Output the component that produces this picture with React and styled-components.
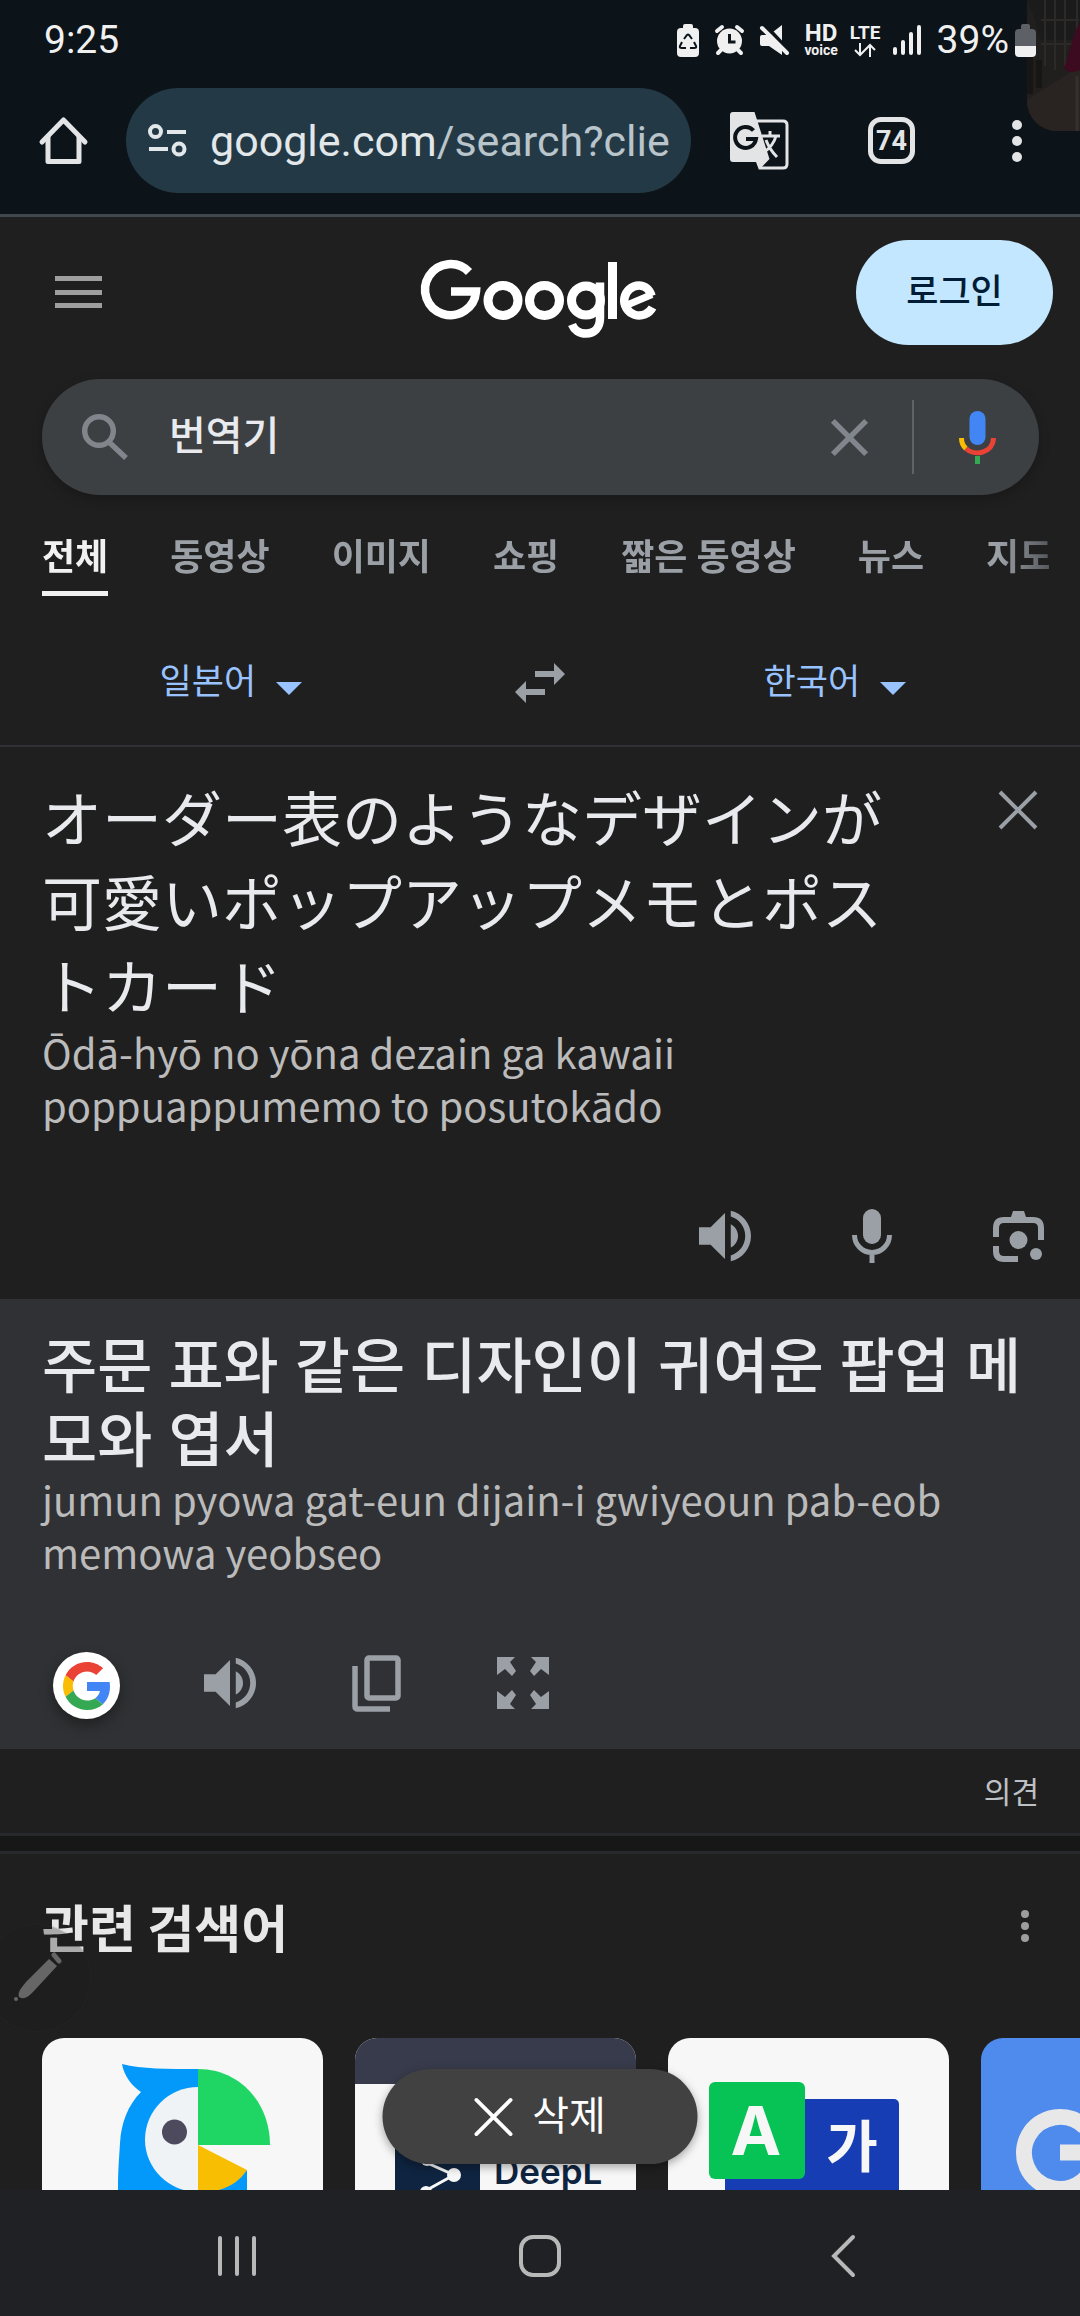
import React, { useState } from "react";
import styled, { createGlobalStyle, css } from "styled-components";

const GlobalStyle = createGlobalStyle`
  *, *::before, *::after { box-sizing: border-box; }
  body {
    margin: 0;
    background: #1f1f1f;
    color: #e8e8e8;
    font-family: Roboto, "Noto Sans CJK KR", sans-serif;
  }
  button, input, select, textarea {
    margin: 0;
    padding: 0;
    border: 0;
    background: none;
    color: inherit;
    font: inherit;
  }
  button { cursor: pointer; }
  svg { display: block; flex: none; overflow: visible; }
`;

const Phone = styled.div`
  position: relative;
  display: flex;
  flex-direction: column;
  height: 100vh;
  overflow: hidden;
`;

/* ---------- status bar and browser toolbar ---------- */

const BrowserTop = styled.header`
  position: relative;
  flex: none;
  background: #0c1319;
  border-bottom: 3px solid #40484e;
  font-family: Roboto, sans-serif;
`;

const CameraPreview = styled.div`
  position: absolute;
  top: 0;
  right: 0;
  width: 53px;
  height: 131px;
  overflow: hidden;
  border-bottom-left-radius: 30px;
`;

const StatusBar = styled.div`
  position: relative;
  display: flex;
  align-items: center;
  justify-content: space-between;
  height: 80px;
  padding: 0 44px;
  color: #f0f0f0;
  font-size: 39px;
  line-height: 48px;
`;

const StatusIcons = styled.div`
  display: flex;
  align-items: center;
  gap: 16px;
`;

const NetworkIcons = styled.div`
  display: flex;
  align-items: center;
  gap: 11px;
`;

const NetworkTag = styled.span`
  display: flex;
  flex-direction: column;
  align-items: center;
  width: 33px;
  font-size: ${(p) => p.$size}px;
  font-weight: 700;
  line-height: 20px;
  small {
    font-size: 14px;
    font-weight: 700;
    line-height: 14px;
  }
`;

const BatteryLevel = styled.span`
  display: flex;
  align-items: center;
  gap: 6px;
`;

const Toolbar = styled.div`
  display: flex;
  align-items: center;
  padding: 8px 40px 21px;
  color: #e3e4e6;
`;

const ToolButton = styled.button`
  display: flex;
  align-items: center;
  justify-content: center;
  flex: none;
`;

const MoreButton = styled(ToolButton)`
  width: 46px;
`;

const AddressBar = styled.button`
  display: flex;
  flex: 1;
  min-width: 0;
  align-items: center;
  gap: 23px;
  height: 105px;
  margin: 0 39px;
  padding: 0 21px 0 22px;
  border-radius: 53px;
  background: #233946;
`;

const Address = styled.span`
  flex: 1;
  min-width: 0;
  overflow: hidden;
  color: #b9c4cb;
  font-size: 43px;
  line-height: 56px;
  text-align: left;
  white-space: nowrap;
  b {
    color: #e2e7ea;
    font-weight: 400;
  }
`;

const ToolbarActions = styled.div`
  display: flex;
  align-items: center;
  gap: 79px;
`;

const TabCount = styled(ToolButton)`
  width: 47px;
  height: 47px;
  border: 5px solid #e3e4e6;
  border-radius: 13px;
  font-size: 27px;
  font-weight: 700;
  line-height: 32px;
`;

/* ---------- page ---------- */

const Page = styled.main`
  flex: 1;
  min-height: 0;
  overflow-x: hidden;
  overflow-y: auto;
  scrollbar-width: none;
`;

const SiteHeader = styled.div`
  display: grid;
  grid-template-columns: 1fr auto 1fr;
  align-items: center;
  padding: 23px 27px 34px;
`;

const MenuButton = styled(ToolButton)`
  justify-self: start;
  margin-left: 28px;
`;

const LoginLink = styled.a`
  justify-self: end;
  width: 197px;
  border-radius: 53px;
  background: #c2e7ff;
  color: #001d35;
  font-size: 35px;
  font-weight: 500;
  line-height: 105px;
  text-align: center;
  text-decoration: none;
`;

const SearchForm = styled.form`
  display: flex;
  align-items: center;
  height: 116px;
  margin: 0 41px 0 42px;
  padding: 0 43px 0 40px;
  border-radius: 58px;
  background: #3c4043;
  box-shadow: 0 4px 12px rgba(0, 0, 0, 0.22);
`;

const SearchInput = styled.input`
  flex: 1;
  min-width: 0;
  margin-left: 41px;
  color: #e8eaed;
  font-size: 40px;
  font-weight: 500;
  line-height: 56px;
  outline: none;
`;

const ClearSearchButton = styled(ToolButton)`
  color: #80868b;
`;

const SearchDivider = styled.span`
  width: 2px;
  height: 74px;
  margin: 0 45px 0 44px;
  background: #5f6368;
`;

const Tabs = styled.nav`
  display: flex;
  gap: 62px;
  height: 101px;
  margin: 0 31px 0 42px;
  overflow: hidden;
  mask-image: linear-gradient(to right, #000 calc(100% - 50px), rgba(0, 0, 0, 0.45));
`;

const Tab = styled.a`
  flex: none;
  padding-top: 28px;
  border-bottom: 5px solid ${(p) => (p.$active ? "#f1f1f1" : "transparent")};
  color: ${(p) => (p.$active ? "#f1f1f1" : "#9aa0a6")};
  font-size: 36px;
  font-weight: 700;
  line-height: 70px;
  text-decoration: none;
  white-space: nowrap;
`;

const LanguageRow = styled.div`
  display: grid;
  grid-template-columns: 1fr 50px 1fr;
  align-items: center;
  padding: 24px 0 0;
  height: 151px;
  border-bottom: 2px solid #303134;
`;

const LanguagePicker = styled.label`
  display: flex;
  align-items: center;
  justify-content: center;
  gap: 19px;
  padding: ${(p) => (p.$side === "from" ? "0 54px 0 0" : "0 0 0 24px")};
  color: #99c3ff;
`;

const LanguageSelect = styled.select`
  appearance: none;
  width: 97px;
  font-size: 35px;
  line-height: 48px;
  outline: none;
  option { color: #1f1f1f; }
`;

const Caret = styled.span`
  margin-top: 12px;
  border: 13px solid transparent;
  border-top-color: #99c3ff;
  border-bottom: 0;
`;

const Panel = styled.section`
  display: flex;
  flex-direction: column;
  justify-content: space-between;
  padding: ${(p) => (p.$result ? "26px 42px 30px" : "27px 36px 36px 42px")};
  height: ${(p) => (p.$result ? 450 : 552)}px;
  background: ${(p) => (p.$result ? "#303134" : "transparent")};
  color: #9aa0a6;
`;

const SourceTop = styled.div`
  display: flex;
  align-items: flex-start;
  justify-content: space-between;
`;

const SourceColumn = styled.div`
  flex: 1;
  min-width: 0;
  max-width: 870px;
`;

const bigText = css`
  margin: 0;
  color: #e8eaed;
  font-size: 60px;
  font-weight: 400;
`;

const SourceText = styled.textarea`
  ${bigText}
  display: block;
  width: 100%;
  overflow: hidden;
  font-family: "Noto Sans CJK JP", sans-serif;
  line-height: 84px;
  resize: none;
  outline: none;
`;

const ResultText = styled.p`
  ${bigText}
  font-family: "Noto Sans CJK KR", sans-serif;
  font-weight: 500;
  line-height: 74px;
  word-break: break-all;
  span {
    font-family: Inter, "Noto Sans CJK KR", sans-serif;
    line-height: 1;
  }
`;

const Romanized = styled.p`
  max-width: 920px;
  margin: 0;
  color: #bbbbbb;
  font-family: "Noto Sans CJK KR", sans-serif;
  font-size: 40px;
  line-height: 53px;
`;

const ShortRomanized = styled(Romanized)`
  max-width: 680px;
`;

const ClearButton = styled(ToolButton)`
  margin: 16px 6px 0 0;
`;

const SourceActions = styled.div`
  display: flex;
  align-items: center;
  justify-content: flex-end;
  gap: 101px;
`;

const ResultActions = styled.div`
  display: flex;
  align-items: center;
  gap: 96px;
  padding-left: 11px;
`;

const GoogleSearchButton = styled(ToolButton)`
  width: 67px;
  height: 67px;
  margin: 5px -12px 0 0;
  border-radius: 50%;
  background: #ffffff;
  box-shadow: 0 6px 14px rgba(0, 0, 0, 0.35);
`;

const FeedbackRow = styled.div`
  display: flex;
  justify-content: flex-end;
  height: 84px;
  padding: 24px 41px 0;
`;

const FeedbackLink = styled.a`
  color: #bdc1c6;
  font-size: 30px;
  line-height: 40px;
  text-decoration: none;
`;

const SectionGap = styled.hr`
  height: 21px;
  margin: 0;
  border: solid #27292c;
  border-width: 3px 0;
  background: #171717;
`;

const RelatedHeader = styled.div`
  display: flex;
  align-items: center;
  justify-content: space-between;
  height: 184px;
  padding: 0 51px 40px 42px;
  color: #9e9e9e;
`;

const RelatedTitle = styled.h2`
  margin: 0;
  color: #e8e8e8;
  font-family: "Noto Sans CJK KR", sans-serif;
  font-size: 51px;
  font-weight: 700;
  line-height: 64px;
`;

const Cards = styled.div`
  display: flex;
  gap: 32px;
  padding-left: 42px;
  overflow: hidden;
`;

const Card = styled.a`
  flex: none;
  width: 281px;
  height: 281px;
  overflow: hidden;
  border-radius: 22px;
  background: ${(p) => p.$bg};
`;

/* ---------- overlays and system navigation ---------- */

const PenBubble = styled.div`
  position: absolute;
  left: -16px;
  bottom: 285px;
  width: 106px;
  height: 106px;
  border-radius: 50%;
  background: rgba(31, 31, 31, 0.3);
  box-shadow: 0 0 2px rgba(60, 60, 60, 0.5);
`;

const DeletePill = styled.button`
  position: absolute;
  left: 50%;
  bottom: 152px;
  display: flex;
  align-items: center;
  justify-content: center;
  gap: 20px;
  width: 315px;
  height: 95px;
  border-radius: 48px;
  background: #414141;
  box-shadow: 0 3px 10px rgba(0, 0, 0, 0.35);
  color: #ffffff;
  font-size: 40px;
  line-height: 56px;
  transform: translateX(-50%);
`;

const SystemNav = styled.nav`
  display: grid;
  grid-template-columns: repeat(3, 303px);
  flex: none;
  justify-content: center;
  height: 126px;
  padding-top: 6px;
  background: #202125;
  color: #b8b8b8;
`;

/* ---------- drawings ---------- */

const PreviewPhoto = () => (
  <svg width="53" height="131" viewBox="0 0 53 131">
    <rect width="53" height="131" fill="#211f1d" />
    <path d="M0 0h53v40H14L6 14z" fill="#1c1b1b" />
    <path d="M18 0v66M28 0v70M38 0v66M14 20h38M14 44h32M50 0v60" stroke="#2c2a28" strokeWidth="2" fill="none" />
    <path d="M3 52v42M12 60v28" stroke="#171615" strokeWidth="6" />
    <path d="M0 100L53 66v65H0z" fill="#292421" />
    <path d="M53 22c-8 14-10 30-16 46 6 6 10 4 16 2z" fill="#3c0b20" />
    <path d="M50 76v55" stroke="#35302d" strokeWidth="3" />
  </svg>
);

const PowerSaveIcon = () => (
  <svg width="22" height="33" viewBox="0 0 22 33">
    <path d="M6 4V2q0-2 2-2h6q2 0 2 2v2h2q4 0 4 4v21q0 4-4 4H4q-4 0-4-4V8q0-4 4-4z" fill="#f0f0f0" />
    <g fill="none" stroke="#0c1319" strokeWidth="2">
      <path d="M7 15l3-4q1-1 2 0l3 4" />
      <path d="M5 18l-2 4q-1 2 2 2h4" />
      <path d="M17 18l2 4q1 2-2 2h-4" />
    </g>
  </svg>
);

const AlarmIcon = () => (
  <svg width="29" height="30" viewBox="0 0 29 30">
    <circle cx="14.500" cy="16" r="12.500" fill="#f0f0f0" />
    <path d="M2 6l5-4M27 6l-5-4M6 25l-3 3M23 25l3 3" stroke="#f0f0f0" strokeWidth="4" strokeLinecap="round" />
    <path d="M14.500 9v8h6" fill="none" stroke="#0c1319" strokeWidth="3" />
  </svg>
);

const MuteIcon = () => (
  <svg width="29" height="30" viewBox="0 0 29 30">
    <path d="M2 10h7L22 0v30L9 21H2q-2 0-2-2v-7q0-2 2-2z" fill="#f0f0f0" />
    <path d="M5 0l25 27" stroke="#0c1319" strokeWidth="4" />
    <path d="M2 3l25 25" stroke="#f0f0f0" strokeWidth="4" strokeLinecap="round" />
  </svg>
);

const SignalIcon = () => (
  <svg width="28" height="30" viewBox="0 0 28 30">
    <path d="M2 24v4M10 17v11M18 9v19M26 2v26" stroke="#f0f0f0" strokeWidth="4" strokeLinecap="round" />
  </svg>
);

const DataArrows = () => (
  <svg width="22" height="14" viewBox="0 0 22 14">
    <path d="M6 0v12M1 7l5 5 5-5M16 14V2M11 7l5-5 5 5" fill="none" stroke="#f0f0f0" strokeWidth="2" />
  </svg>
);

const BatteryIcon = () => (
  <svg width="21" height="33" viewBox="0 0 21 33">
    <path d="M6 5V2q0-2 2-2h5q2 0 2 2v3h2q4 0 4 4v13H0V9q0-4 4-4z" fill="#5d6066" />
    <path d="M0 22h21v7q0 4-4 4H4q-4 0-4-4z" fill="#f0f0f0" />
  </svg>
);

const HomeIcon = () => (
  <svg width="47" height="47" viewBox="0 0 47 47" fill="none" stroke="currentColor" strokeWidth="5">
    <path d="M2 25L23.500 3 45 25" strokeLinejoin="round" strokeLinecap="round" />
    <path d="M8 19v25.500h31V19" strokeLinejoin="round" />
  </svg>
);

const TuneIcon = () => (
  <svg width="39" height="33" viewBox="0 0 39 33" fill="none" stroke="#e2e7ea" strokeWidth="4">
    <circle cx="7.500" cy="7.500" r="5.500" />
    <path d="M19 8h19M1 25h19" />
    <circle cx="31" cy="25" r="5.500" />
  </svg>
);

const TranslateIcon = () => (
  <svg width="59" height="58" viewBox="0 0 59 58">
    <path d="M25 9h28q4 0 4 4v39q0 4-4 4H30" fill="none" stroke="currentColor" strokeWidth="3" />
    <path d="M3 0h21.500L39.500 47 29 58l-3-8H3q-3 0-3-3V3q0-3 3-3z" fill="currentColor" />
    <path d="M23.500 18.500A10.500 10.500 0 1 0 26 27H16" fill="none" stroke="#0c1319" strokeWidth="4" />
    <path d="M32 24h18M40 19v5M46 24c-2 8-7 13-13 17M36 28c3 8 6 12 11 17" fill="none" stroke="currentColor" strokeWidth="3" />
  </svg>
);

const DotsIcon = ({ r, gap }) => {
  const height = gap * 2 + r * 2;
  return (
    <svg width={r * 2} height={height} viewBox={`0 0 ${r * 2} ${height}`} fill="currentColor">
      <circle cx={r} cy={r} r={r} />
      <circle cx={r} cy={r + gap} r={r} />
      <circle cx={r} cy={r + gap * 2} r={r} />
    </svg>
  );
};

const MenuIcon = () => (
  <svg width="47" height="33" viewBox="0 0 47 33" fill="#9e9e9e">
    <rect width="47" height="5" />
    <rect y="14" width="47" height="5" />
    <rect y="27" width="47" height="5" />
  </svg>
);

const GoogleLogo = () => (
  <svg width="235" height="92" viewBox="2 -13 235 92" role="img" aria-label="Google" fill="none" stroke="#ffffff" strokeWidth="9">
    <path d="M48 12A25.500 25.500 0 1 0 55 31.500H30" strokeWidth="8.500" />
    <circle cx="82" cy="40.500" r="15" />
    <circle cx="123.500" cy="40.500" r="15" />
    <circle cx="165" cy="40.500" r="14.500" />
    <path d="M179 22.500V58c0 10-6 15.500-14 15.500-7 0-12-4-14-9" strokeWidth="8.500" />
    <path d="M191.500 2v57" />
    <path d="M205 45.500l26-11" strokeWidth="7" />
    <path d="M230.500 36c-2-7-7-10.500-12.500-10.500a15 15 0 1 0 13.500 22" strokeWidth="8.500" />
  </svg>
);

const SearchIcon = () => (
  <svg width="46" height="46" viewBox="0 0 46 46" fill="none" stroke="#80868b" strokeWidth="5.500">
    <circle cx="17" cy="17" r="14.300" />
    <path d="M28 29l16 15" />
  </svg>
);

const CrossIcon = ({ size, stroke, cap }) => (
  <svg width={size} height={size} viewBox="0 0 40 40" fill="none" stroke="currentColor" strokeWidth={stroke} strokeLinecap={cap}>
    <path d="M2 2l36 36M38 2L2 38" />
  </svg>
);

const ColorMicIcon = () => (
  <svg width="37" height="53" viewBox="0 0 37 53" fill="none">
    <rect x="10.500" width="16" height="34" rx="8" fill="#4285f4" />
    <path d="M2.500 27c0 4 1.500 8 4.500 10.500" stroke="#fbbc04" strokeWidth="5" />
    <path d="M7 37.500c8 8 27 5 27.500-10.500" stroke="#ea4335" strokeWidth="5" />
    <path d="M18.500 45v8" stroke="#34a853" strokeWidth="5" />
  </svg>
);

const SwapIcon = () => (
  <svg width="50" height="40" viewBox="0 0 50 40" fill="#9aa0a6">
    <path d="M20 8h19V0l11 11-11 11v-8H20z" />
    <path d="M30 26H11v-8L0 29l11 11v-8h19z" />
  </svg>
);

const VolumeIcon = () => (
  <svg width="52" height="52" viewBox="3 3 18 18" fill="currentColor">
    <path d="M3 9v6h4l5 5V4L7 9H3zm13.500 3c0-1.770-1.020-3.290-2.500-4.030v8.050c1.480-.730 2.500-2.250 2.500-4.020zM14 3.230v2.060c2.890.860 5 3.540 5 6.710s-2.110 5.850-5 6.710v2.060c4.010-.910 7-4.490 7-8.770s-2.990-7.860-7-8.770z" />
  </svg>
);

const MicIcon = () => (
  <svg width="40" height="54" viewBox="0 0 40 54">
    <rect x="11" width="18" height="35" rx="9" fill="currentColor" />
    <path d="M2.500 26a17.500 17.500 0 0 0 35 0M20 43v11" fill="none" stroke="currentColor" strokeWidth="5" />
  </svg>
);

const LensIcon = () => (
  <svg width="51" height="51" viewBox="0 0 51 51">
    <path d="M3 26v-9q0-8 8-8h29q8 0 8 8v12M3 35v5q0 8 8 8h14" fill="none" stroke="currentColor" strokeWidth="6" />
    <path d="M17 9l3-9h11l3 9z" fill="currentColor" />
    <circle cx="25.500" cy="29" r="9" fill="currentColor" />
    <circle cx="43" cy="43" r="6" fill="currentColor" />
  </svg>
);

const CopyIcon = () => (
  <svg width="49" height="57" viewBox="0 0 49 57" fill="none" stroke="currentColor" strokeWidth="5.500">
    <rect x="15" y="3" width="31" height="40" rx="2" />
    <path d="M3 11v40q0 3 3 3h32" />
  </svg>
);

const ARROW = "0,0 18,0 13,5 19,14 15,19 8,12 0,18";
const ExpandIcon = () => (
  <svg width="52" height="52" viewBox="0 0 52 52" fill="currentColor">
    <polygon points={ARROW} />
    <polygon points={ARROW} transform="translate(52 0) scale(-1 1)" />
    <polygon points={ARROW} transform="translate(0 52) scale(1 -1)" />
    <polygon points={ARROW} transform="translate(52 52) scale(-1 -1)" />
  </svg>
);

const GoogleMark = () => (
  <svg width="48" height="48" viewBox="0 0 48 48">
    <path fill="#ea4335" d="M24 9.500c3.540 0 6.710 1.220 9.210 3.600l6.850-6.850C35.900 2.380 30.470 0 24 0 14.620 0 6.510 5.380 2.560 13.220l7.980 6.190C12.430 13.720 17.740 9.500 24 9.500z" />
    <path fill="#4285f4" d="M46.980 24.550c0-1.570-.150-3.090-.380-4.550H24v9.020h12.940c-.580 2.960-2.260 5.480-4.780 7.180l7.730 6c4.510-4.180 7.090-10.360 7.090-17.650z" />
    <path fill="#fbbc05" d="M10.530 28.590c-.480-1.450-.760-2.990-.760-4.590s.270-3.140.760-4.590l-7.980-6.190C.920 16.460 0 20.120 0 24c0 3.880.920 7.540 2.560 10.780l7.970-6.190z" />
    <path fill="#34a853" d="M24 48c6.480 0 11.930-2.130 15.890-5.810l-7.730-6c-2.150 1.450-4.920 2.300-8.160 2.300-6.260 0-11.570-4.220-13.470-9.910l-7.980 6.190C6.510 42.620 14.620 48 24 48z" />
  </svg>
);

const ParrotArt = () => (
  <svg width="281" height="281" viewBox="0 0 281 281">
    <path d="M80 26c20 5 45 5 76 5v250H76V152c0-20 1-30 2-47 1-20 8-38 21-51-9-6-17-16-19-28z" fill="#0399fb" />
    <path d="M205 132v149h-50V155z" fill="#0399fb" />
    <path d="M156 49a53 52.500 0 0 0 0 105z" fill="#eff3f5" />
    <path d="M156 31c42 0 72 34 72 76h-72z" fill="#1fd665" />
    <path d="M156 107l49 25c-10 15-25 22-49 23z" fill="#f8be02" />
    <circle cx="132.500" cy="94" r="12.500" fill="#4c4a5c" />
  </svg>
);

const DeepLArt = () => (
  <svg width="281" height="281" viewBox="0 0 281 281">
    <rect width="281" height="46" fill="#373b4b" />
    <rect x="40" y="80" width="85" height="110" fill="#0f2440" />
    <path d="M70 124l29 13-29 16" fill="none" stroke="#f7f7f7" strokeWidth="3" />
    <circle cx="99" cy="137" r="7" fill="#f7f7f7" />
    <circle cx="72" cy="122" r="6" fill="#f7f7f7" />
    <circle cx="71" cy="154" r="6" fill="#f7f7f7" />
    <text x="139" y="146" fill="#0f2440" fontFamily="Inter, sans-serif" fontSize="35" fontWeight="600">DeepL</text>
  </svg>
);

const PapagoArt = () => (
  <svg width="281" height="281" viewBox="0 0 281 281">
    <rect x="57" y="61" width="174" height="160" rx="5" fill="#173db5" />
    <rect x="41" y="44" width="96" height="97" rx="6" fill="#07c255" />
    <text x="88" y="117" textAnchor="middle" fill="#f7f7f7" fontFamily="Inter, sans-serif" fontSize="68" fontWeight="700">A</text>
    <text x="184" y="129" textAnchor="middle" fill="#f7f7f7" fontFamily="Noto Sans CJK KR, sans-serif" fontSize="56" fontWeight="700">가</text>
  </svg>
);

const TranslateArt = () => (
  <svg width="281" height="281" viewBox="0 0 281 281">
    <path d="M104 89A36 36 0 1 0 115 114.500H79" fill="none" stroke="#e8e8e8" strokeWidth="16" />
  </svg>
);

const PenIcon = () => (
  <svg width="106" height="106" viewBox="-16 1925 106 106">
    <path d="M49 1959l8 7-24 26c-5 5-9 8-14 5-2-5 3-10 7-15z" fill="#666666" />
    <path d="M54 1955l5 6" stroke="#666666" strokeWidth="5" strokeLinecap="round" />
    <circle cx="16" cy="1999" r="2" fill="#666666" />
  </svg>
);

const RecentsIcon = () => (
  <svg width="38" height="42" viewBox="0 0 38 42">
    <path d="M2 3v36M19 3v36M36 3v36" stroke="currentColor" strokeWidth="4" strokeLinecap="round" />
  </svg>
);

const HomeKeyIcon = () => (
  <svg width="42" height="42" viewBox="0 0 42 42">
    <rect x="2" y="2" width="38" height="38" rx="12" fill="none" stroke="currentColor" strokeWidth="4" />
  </svg>
);

const BackIcon = () => (
  <svg width="24" height="42" viewBox="0 0 24 42">
    <path d="M22 2L3 21l19 19" fill="none" stroke="currentColor" strokeWidth="4" strokeLinecap="round" />
  </svg>
);

const TABS = ["전체", "동영상", "이미지", "쇼핑", "짧은 동영상", "뉴스", "지도"];
const LANGUAGES = ["일본어", "한국어"];

function Language({ side, label, value, onChange }) {
  return (
    <LanguagePicker $side={side}>
      <LanguageSelect aria-label={label} value={value} onChange={(e) => onChange(e.target.value)}>
        {LANGUAGES.map((l) => (
          <option key={l}>{l}</option>
        ))}
      </LanguageSelect>
      <Caret />
    </LanguagePicker>
  );
}

export default function App() {
  const [query, setQuery] = useState("번역기");
  const [from, setFrom] = useState("일본어");
  const [to, setTo] = useState("한국어");
  const [source, setSource] = useState("オーダー表のようなデザインが可愛いポップアップメモとポストカード");

  return (
    <Phone>
      <GlobalStyle />
      <BrowserTop>
        <CameraPreview><PreviewPhoto /></CameraPreview>
        <StatusBar>
          <span>9:25</span>
          <StatusIcons>
            <PowerSaveIcon />
            <AlarmIcon />
            <MuteIcon />
            <NetworkIcons>
              <NetworkTag $size={24}>HD<small>voice</small></NetworkTag>
              <NetworkTag $size={19}>LTE<DataArrows /></NetworkTag>
              <SignalIcon />
            </NetworkIcons>
            <BatteryLevel>39%<BatteryIcon /></BatteryLevel>
          </StatusIcons>
        </StatusBar>
        <Toolbar>
          <ToolButton aria-label="홈"><HomeIcon /></ToolButton>
          <AddressBar>
            <TuneIcon />
            <Address><b>google.com</b>/search?client</Address>
          </AddressBar>
          <ToolbarActions>
            <ToolButton aria-label="번역"><TranslateIcon /></ToolButton>
            <TabCount>74</TabCount>
            <MoreButton aria-label="더보기"><DotsIcon r={5} gap={16} /></MoreButton>
          </ToolbarActions>
        </Toolbar>
      </BrowserTop>

      <Page>
        <SiteHeader>
          <MenuButton aria-label="메뉴"><MenuIcon /></MenuButton>
          <GoogleLogo />
          <LoginLink href="#login">로그인</LoginLink>
        </SiteHeader>

        <SearchForm role="search" onSubmit={(e) => e.preventDefault()}>
          <SearchIcon />
          <SearchInput aria-label="검색" value={query} onChange={(e) => setQuery(e.target.value)} />
          <ClearSearchButton type="button" aria-label="지우기" onClick={() => setQuery("")}>
            <CrossIcon size={37} stroke={6} />
          </ClearSearchButton>
          <SearchDivider />
          <ToolButton type="button" aria-label="음성 검색"><ColorMicIcon /></ToolButton>
        </SearchForm>

        <Tabs>
          {TABS.map((t, i) => (
            <Tab key={t} href="#tab" $active={i === 0}>{t}</Tab>
          ))}
        </Tabs>

        <LanguageRow>
          <Language side="from" label="출발어" value={from} onChange={setFrom} />
          <ToolButton aria-label="언어 바꾸기" onClick={() => { setFrom(to); setTo(from); }}><SwapIcon /></ToolButton>
          <Language side="to" label="도착어" value={to} onChange={setTo} />
        </LanguageRow>

        <Panel>
          <SourceTop>
            <SourceColumn>
              <SourceText aria-label="원문" lang="ja" rows={3} value={source} onChange={(e) => setSource(e.target.value)} />
              <ShortRomanized>Ōdā-hyō no yōna dezain ga kawaii poppuappumemo to posutokādo</ShortRomanized>
            </SourceColumn>
            <ClearButton aria-label="원문 지우기" onClick={() => setSource("")}><CrossIcon size={40} stroke={4} /></ClearButton>
          </SourceTop>
          <SourceActions>
            <ToolButton aria-label="듣기"><VolumeIcon /></ToolButton>
            <ToolButton aria-label="말하기"><MicIcon /></ToolButton>
            <ToolButton aria-label="렌즈"><LensIcon /></ToolButton>
          </SourceActions>
        </Panel>

        <Panel $result>
          <div>
            <ResultText><span>주문 표와 같은 디자인이 귀여운 팝업 메모와 엽서</span></ResultText>
            <Romanized>jumun pyowa gat-eun dijain-i gwiyeoun pab-eob memowa yeobseo</Romanized>
          </div>
          <ResultActions>
            <GoogleSearchButton aria-label="Google 검색"><GoogleMark /></GoogleSearchButton>
            <ToolButton aria-label="듣기"><VolumeIcon /></ToolButton>
            <ToolButton aria-label="복사"><CopyIcon /></ToolButton>
            <ToolButton aria-label="전체 화면"><ExpandIcon /></ToolButton>
          </ResultActions>
        </Panel>

        <FeedbackRow><FeedbackLink href="#feedback">의견</FeedbackLink></FeedbackRow>
        <SectionGap />

        <RelatedHeader>
          <RelatedTitle>관련 검색어</RelatedTitle>
          <ToolButton aria-label="옵션"><DotsIcon r={4} gap={12} /></ToolButton>
        </RelatedHeader>
        <Cards>
          <Card href="#papago" aria-label="파파고" $bg="#f7f7f7"><ParrotArt /></Card>
          <Card href="#deepl" aria-label="DeepL" $bg="#f7f7f7"><DeepLArt /></Card>
          <Card href="#naver" aria-label="번역" $bg="#f7f7f7"><PapagoArt /></Card>
          <Card href="#google" aria-label="Google 번역" $bg="#4f8bed"><TranslateArt /></Card>
        </Cards>
      </Page>

      <SystemNav>
        <ToolButton aria-label="최근 앱"><RecentsIcon /></ToolButton>
        <ToolButton aria-label="홈 화면"><HomeKeyIcon /></ToolButton>
        <ToolButton aria-label="뒤로"><BackIcon /></ToolButton>
      </SystemNav>

      <PenBubble><PenIcon /></PenBubble>
      <DeletePill><CrossIcon size={38} stroke={4} cap="round" />삭제</DeletePill>
    </Phone>
  );
}
